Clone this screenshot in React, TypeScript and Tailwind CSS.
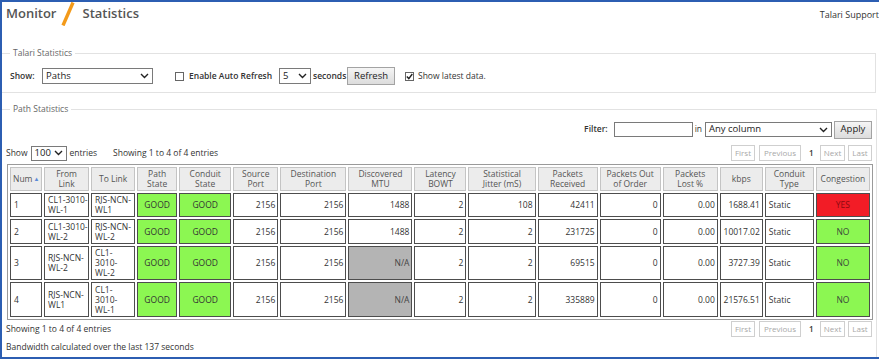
type Cell = { t: string[]; kind?: "num" | "text" | "good" | "yes" | "no" | "na" };

const widths = [32, 45, 44, 40, 52, 45, 66, 64, 52, 67, 60, 61, 55, 43, 49, 54];

const headers: string[][] = [
  ["Num"],
  ["From", "Link"],
  ["To Link"],
  ["Path", "State"],
  ["Conduit", "State"],
  ["Source", "Port"],
  ["Destination", "Port"],
  ["Discovered", "MTU"],
  ["Latency", "BOWT"],
  ["Statistical", "Jitter (mS)"],
  ["Packets", "Received"],
  ["Packets Out", "of Order"],
  ["Packets", "Lost %"],
  ["kbps"],
  ["Conduit", "Type"],
  ["Congestion"],
];

const n = (v: string): Cell => ({ t: [v], kind: "num" });
const tx = (...v: string[]): Cell => ({ t: v, kind: "text" });
const good: Cell = { t: ["GOOD"], kind: "good" };
const na: Cell = { t: ["N/A"], kind: "na" };

const rows: { h: string; cells: Cell[] }[] = [
  {
    h: "h-[24px]",
    cells: [tx("1"), tx("CL1-3010-", "WL-1"), tx("RJS-NCN-", "WL1"), good, good, n("2156"), n("2156"), n("1488"), n("2"), n("108"), n("42411"), n("0"), n("0.00"), n("1688.41"), tx("Static"), { t: ["YES"], kind: "yes" }],
  },
  {
    h: "h-[25px]",
    cells: [tx("2"), tx("CL1-3010-", "WL-2"), tx("RJS-NCN-", "WL-2"), good, good, n("2156"), n("2156"), n("1488"), n("2"), n("2"), n("231725"), n("0"), n("0.00"), n("10017.02"), tx("Static"), { t: ["NO"], kind: "no" }],
  },
  {
    h: "h-[34px]",
    cells: [tx("3"), tx("RJS-NCN-", "WL-2"), tx("CL1-", "3010-", "WL-2"), good, good, n("2156"), n("2156"), na, n("2"), n("2"), n("69515"), n("0"), n("0.00"), n("3727.39"), tx("Static"), { t: ["NO"], kind: "no" }],
  },
  {
    h: "h-[35px]",
    cells: [tx("4"), tx("RJS-NCN-", "WL1"), tx("CL1-", "3010-", "WL-1"), good, good, n("2156"), n("2156"), na, n("2"), n("2"), n("335889"), n("0"), n("0.00"), n("21576.51"), tx("Static"), { t: ["NO"], kind: "no" }],
  },
];

function Chevron() {
  return (
    <svg width="9" height="6" viewBox="0 0 9 6" className="shrink-0">
      <path d="M1 1 L4.5 4.5 L8 1" fill="none" stroke="#222" strokeWidth="1.4" />
    </svg>
  );
}

function Select({ value, className }: { value: string; className: string }) {
  return (
    <div className={`flex items-center justify-between border border-[#7a7a7a] bg-white pl-[3px] pr-[3px] text-[9.5px] text-[#222] ${className}`}>
      <span>{value}</span>
      <Chevron />
    </div>
  );
}

function Checkbox({ checked }: { checked?: boolean }) {
  return (
    <div className="flex h-[9px] w-[9px] shrink-0 items-center justify-center border border-[#666] bg-white">
      {checked && (
        <svg width="7" height="7" viewBox="0 0 7 7">
          <path d="M0.8 3.6 L2.8 5.6 L6.3 1" fill="none" stroke="#222" strokeWidth="1.4" />
        </svg>
      )}
    </div>
  );
}

function Button({ label, className }: { label: string; className: string }) {
  return (
    <div className={`flex items-center justify-center border border-[#a3a3a3] bg-gradient-to-b from-[#f5f5f5] to-[#dcdcdc] text-[9.5px] text-[#222] ${className}`}>
      {label}
    </div>
  );
}

function Pager() {
  const btn = "flex h-[16px] items-center justify-center border border-[#cfcfcf] bg-white text-[8px] text-[#a8a8a8]";
  return (
    <div className="flex items-center">
      <div className={`${btn} w-[24px]`}>First</div>
      <div className={`${btn} ml-[4px] w-[42px]`}>Previous</div>
      <div className="ml-[8px] w-[10px] text-[8px] font-semibold text-[#333]">1</div>
      <div className={`${btn} ml-[1px] w-[25px]`}>Next</div>
      <div className={`${btn} ml-[3px] w-[24px]`}>Last</div>
    </div>
  );
}

function DataCell({ c }: { c: Cell }) {
  const base = "border border-[#4d4d4d] text-[8.5px] leading-[10px]";
  let cls = "bg-white text-left text-[#333] px-[3px]";
  if (c.kind === "num") cls = "bg-white text-right text-[#333] px-[2px]";
  if (c.kind === "good") cls = "bg-[#8cf752] text-center text-[#333]";
  if (c.kind === "no") cls = "bg-[#8cf752] text-center text-[#3a4a3a]";
  if (c.kind === "yes") cls = "bg-[#f21c26] text-center text-[#8a0a10]";
  if (c.kind === "na") cls = "bg-[#b4b4b4] text-right text-[#444] px-[2px]";
  return (
    <td className={`${base} ${cls}`}>
      {c.t.map((l, k) => (
        <div key={k} className="whitespace-nowrap">
          {l}
        </div>
      ))}
    </td>
  );
}

export default function App() {
  return (
    <div className="flex h-[359px] w-[879px] flex-col overflow-hidden border-b-2 border-l-2 border-t-2 border-[#2c5eb2] bg-white font-['Open_Sans',sans-serif] text-[#333]">
      {/* Title bar */}
      <div className="flex h-[45px] shrink-0 items-start">
        <span className="ml-[4px] mt-[3px] text-[13px] font-semibold leading-[16px] text-[#555]">Monitor</span>
        <svg width="16" height="24" viewBox="0 0 16 24" className="ml-[4px]">
          <path d="M13 0.5 L3 23.5" stroke="#f39a1a" strokeWidth="3.4" />
        </svg>
        <span className="ml-[6px] mt-[3px] text-[13px] font-semibold leading-[16px] text-[#555]">Statistics</span>
        <span className="ml-auto mt-[7px] text-[9px] leading-[12px] text-[#333]">Talari Support</span>
      </div>

      {/* Talari Statistics */}
      <fieldset className="mr-[3px] shrink-0 border border-l-0 border-[#e2e2e2] pb-[7px] pl-[8px]">
        <legend className="px-[3px] text-[8.5px] leading-[12px] text-[#666]">Talari Statistics</legend>
        <div className="mt-[8px] flex h-[18px] items-center text-[8.5px]">
          <span className="w-[32px] font-semibold">Show:</span>
          <Select value="Paths" className="h-[16px] w-[111px]" />
          <div className="ml-[22px]">
            <Checkbox />
          </div>
          <span className="ml-[5px] w-[90px] font-semibold">Enable Auto Refresh</span>
          <Select value="5" className="h-[16px] w-[32px]" />
          <span className="ml-[2px] w-[34px] font-semibold">seconds</span>
          <Button label="Refresh" className="h-[18px] w-[48px]" />
          <div className="ml-[10px]">
            <Checkbox checked />
          </div>
          <span className="ml-[4px]">Show latest data.</span>
        </div>
      </fieldset>

      {/* Path Statistics */}
      <fieldset className="mr-[3px] mt-[10px] flex-1 border-r border-t border-[#e2e2e2] pl-[4px] pr-[3px]">
        <legend className="ml-[4px] px-[3px] text-[8.5px] leading-[12px] text-[#666]">Path Statistics</legend>

        <div className="mt-[5px] flex h-[19px] items-center justify-end pr-[1px] text-[8.5px]">
          <span className="font-semibold">Filter:</span>
          <div className="ml-[6px] h-[15px] w-[79px] border border-[#7a7a7a] bg-white" />
          <span className="ml-[2px]">in</span>
          <Select value="Any column" className="ml-[3px] h-[15px] w-[127px]" />
          <Button label="Apply" className="ml-[2px] h-[18px] w-[38px]" />
        </div>

        <div className="mt-[6px] flex h-[16px] items-center pr-[1px] text-[8.5px]">
          <span>Show</span>
          <Select value="100" className="ml-[3px] h-[15px] w-[36px]" />
          <span className="ml-[3px]">entries</span>
          <span className="ml-[16px]">Showing 1 to 4 of 4 entries</span>
          <div className="ml-auto">
            <Pager />
          </div>
        </div>

        <table className="ml-[1px] mt-[3px] w-[866px] table-fixed border-separate border-spacing-[2px] border border-[#9a9a9a]">
          <colgroup>
            {widths.map((w, i) => (
              <col key={i} style={{ width: w }} />
            ))}
          </colgroup>
          <thead>
            <tr className="h-[24px]">
              {headers.map((h, i) => (
                <th
                  key={i}
                  className={`border border-[#c4c4c4] bg-[#ececec] px-[2px] text-[8.5px] font-normal leading-[10.5px] text-[#555] ${i === 0 ? "text-left" : "text-center"}`}
                >
                  {i === 0 ? (
                    <span>
                      Num<span className="ml-[1px] align-top text-[6px] text-[#5b8ad8]">▲</span>
                    </span>
                  ) : (
                    h.map((l, k) => (
                      <div key={k} className="whitespace-nowrap">
                        {l}
                      </div>
                    ))
                  )}
                </th>
              ))}
            </tr>
          </thead>
          <tbody>
            {rows.map((r, ri) => (
              <tr key={ri} className={r.h}>
                {r.cells.map((c, i) => (
                  <DataCell key={i} c={c} />
                ))}
              </tr>
            ))}
          </tbody>
        </table>

        <div className="mt-[1px] flex h-[16px] items-center pr-[1px] text-[8.5px]">
          <span>Showing 1 to 4 of 4 entries</span>
          <div className="ml-auto">
            <Pager />
          </div>
        </div>
        <div className="mt-[4px] text-[8.5px] leading-[12px]">Bandwidth calculated over the last 137 seconds</div>
      </fieldset>
    </div>
  );
}
